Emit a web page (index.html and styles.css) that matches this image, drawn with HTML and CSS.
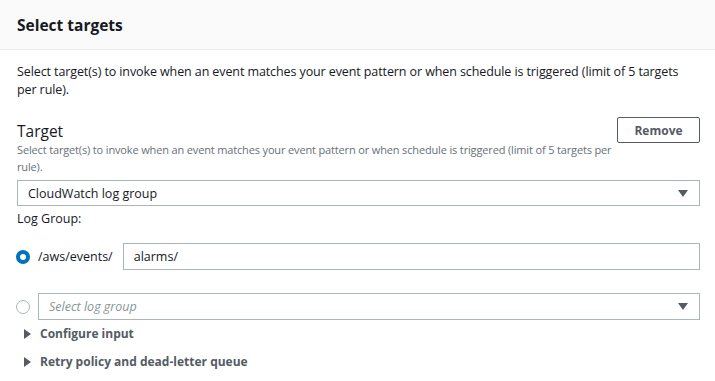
FILE: index.html
```html
<!DOCTYPE html>
<html>
<head>
<meta charset="utf-8">
<link rel="stylesheet" href="styles.css">
</head>
<body>
<div class="panel">
  <div class="panel-header"><h2>Select targets</h2></div>
  <div class="panel-body">
    <p class="desc">Select target(s) to invoke when an event matches your event pattern or when schedule is triggered (limit of 5 targets per rule).</p>
    <div class="target-head">
      <div class="target-text">
        <div class="target-title">Target</div>
        <div class="target-hint">Select target(s) to invoke when an event matches your event pattern or when schedule is triggered (limit of 5 targets per rule).</div>
      </div>
      <button class="btn">Remove</button>
    </div>
    <div class="select">
      <span>CloudWatch log group</span>
      <span class="caret"></span>
    </div>
    <div class="label">Log Group:</div>
    <div class="radio-row first">
      <span class="radio on"></span>
      <span class="prefix">/aws/events/</span>
      <div class="input">alarms/</div>
    </div>
    <div class="radio-row second">
      <span class="radio"></span>
      <div class="select grow">
        <span class="placeholder">Select log group</span>
        <span class="caret"></span>
      </div>
    </div>
    <div class="expander first-exp"><span class="tri"></span>Configure input</div>
    <div class="expander"><span class="tri"></span>Retry policy and dead-letter queue</div>
  </div>
</div>
</body>
</html>
```
FILE: styles.css
```css
* { box-sizing: border-box; }
body {
  margin: 0;
  font-family: "Open Sans", "Noto Sans", sans-serif;
  color: #16191f;
  background: #fff;
}
.panel-header {
  height: 50px;
  background: #fafafa;
  border-bottom: 1px solid #eaeded;
  padding: 0 17px;
  display: flex;
  align-items: center;
}
.panel-header h2 {
  margin: 0;
  font-size: 15.5px;
  font-weight: 700;
}
.panel-body {
  padding: 0 15px 0 17px;
}
.desc {
  margin: 13px 0 0;
  font-size: 12.5px;
  letter-spacing: -0.1px;
  line-height: 18px;
  color: #16191f;
}
.target-head {
  margin-top: 22px;
  display: flex;
  justify-content: space-between;
  align-items: flex-start;
}
.target-title {
  font-size: 15.5px;
  line-height: 20px;
}
.target-hint {
  font-size: 11px;
  letter-spacing: -0.15px;
  line-height: 17px;
  color: #687078;
  width: 600px;
}
.btn {
  margin-top: -4px;
  width: 86px;
  height: 26px;
  border: 1px solid #545b64;
  border-radius: 2px;
  background: #fff;
  color: #545b64;
  font-family: inherit;
  font-size: 12px;
  font-weight: 700;
  padding: 0;
}
.select {
  margin-top: 5px;
  height: 26px;
  border: 1px solid #aab7b8;
  display: flex;
  align-items: center;
  justify-content: space-between;
  padding: 0 11px 0 10px;
  font-size: 12.5px;
}
.caret {
  width: 0; height: 0;
  border-left: 5px solid transparent;
  border-right: 5px solid transparent;
  border-top: 7px solid #545b64;
}
.label {
  font-size: 12.5px;
  line-height: 18px;
  margin-top: 4px;
}
.radio-row {
  display: flex;
  align-items: center;
}
.radio-row.first { margin-top: 15px; }
.radio-row.second { margin-top: 23px; }
.radio {
  width: 14px; height: 14px;
  border-radius: 50%;
  border: 1px solid #aab7b8;
  flex: none;
  margin-left: -1px;
}
.radio.on {
  border: 4px solid #0073bb;
}
.prefix {
  font-size: 12.5px;
  margin-left: 8px;
  margin-right: 10px;
}
.input {
  flex: 1;
  height: 27px;
  border: 1px solid #aab7b8;
  font-size: 12.5px;
  display: flex;
  align-items: center;
  padding-left: 10px;
}
.select.grow {
  flex: 1;
  margin: 0 0 0 8px;
  height: 27px;
}
.placeholder {
  font-style: italic;
  color: #879596;
}
.expander {
  font-size: 12px;
  font-weight: 700;
  color: #545b64;
  display: flex;
  align-items: center;
  margin-top: 11px;
  line-height: 17px;
  padding-left: 7px;
}
.expander.first-exp { margin-top: 5px; }
.tri {
  width: 0; height: 0;
  border-top: 5px solid transparent;
  border-bottom: 5px solid transparent;
  border-left: 7px solid #545b64;
  margin-right: 9px;
}
```
